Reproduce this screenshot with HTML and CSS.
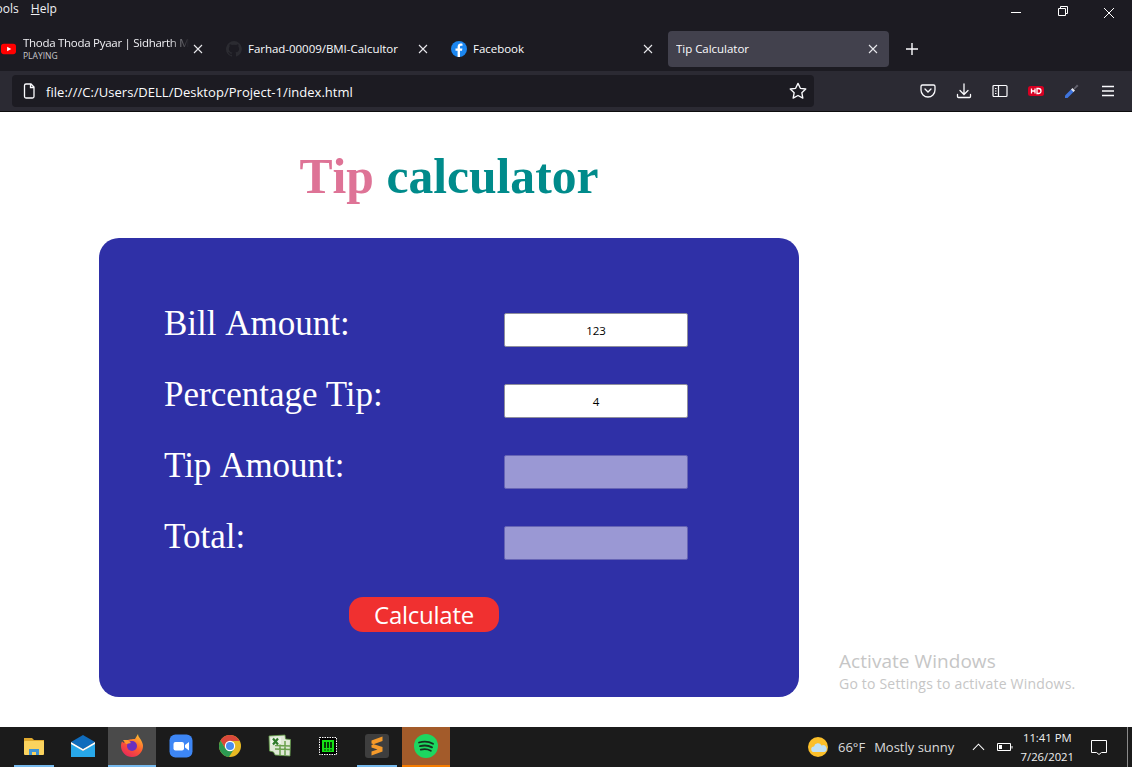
FILE: index.html
```html
<!DOCTYPE html>
<html lang="en">
<head>
<meta charset="utf-8">
<title>Tip Calculator</title>
<link rel="stylesheet" href="styles.css">
</head>
<body>
<div class="window">
  <header class="chrome">
    <div class="titlebar">
      <nav class="menu"><span class="menu-tools">Tools</span><span class="menu-help"><u>H</u>elp</span></nav>
      <div class="winctl">
        <svg class="wc" viewBox="0 0 46 20"><path d="M17 12.500h10" stroke="#fff" fill="none"/></svg>
        <svg class="wc" viewBox="0 0 46 20"><path d="M18.500 8.500h7v7h-7zM20.500 8.500v-2h7v7h-2" stroke="#fff" fill="none"/></svg>
        <svg class="wc" viewBox="0 0 46 20"><path d="M18 8l10 10M28 8l-10 10" stroke="#fff" fill="none"/></svg>
      </div>
    </div>
    <div class="tabs">
      <div class="tab tab-first">
        <svg class="fav fav-yt" viewBox="0 0 16 16"><rect y="2.500" width="16" height="11" rx="3" fill="#f00"/><path d="M6.500 5.500l4.500 2.500-4.500 2.500z" fill="#fff"/></svg>
        <div class="tab-stack"><span class="tab-title fade">Thoda Thoda Pyaar | Sidharth Malhotra</span><span class="tab-sub">PLAYING</span></div>
        <svg class="x" viewBox="0 0 10 10"><path d="M1 1l8 8M9 1l-8 8"/></svg>
      </div>
      <div class="tab">
        <svg class="fav" viewBox="0 0 16 16"><path fill="#2b2b31" d="M8 0a8 8 0 0 0-2.500 15.600c.4.100.5-.2.500-.4v-1.400c-2.200.5-2.700-1-2.700-1-.4-.9-.9-1.200-.9-1.200-.7-.5.100-.5.100-.5.800.100 1.200.8 1.200.8.700 1.200 1.900.9 2.300.7.100-.5.300-.9.500-1.100-1.800-.2-3.600-.9-3.600-4 0-.9.300-1.600.8-2.100-.1-.2-.4-1 .100-2.100 0 0 .7-.2 2.200.8a7.600 7.600 0 0 1 4 0c1.500-1 2.200-.8 2.200-.8.400 1.100.2 1.900.100 2.100.5.600.8 1.300.8 2.100 0 3.100-1.900 3.700-3.700 3.900.3.300.6.700.6 1.500v2.200c0 .2.100.5.600.4A8 8 0 0 0 8 0z"/></svg>
        <span class="tab-title">Farhad-00009/BMI-Calcultor</span>
        <svg class="x" viewBox="0 0 10 10"><path d="M1 1l8 8M9 1l-8 8"/></svg>
      </div>
      <div class="tab">
        <svg class="fav" viewBox="0 0 16 16"><circle cx="8" cy="8" r="8" fill="#1b86f0"/><path fill="#fff" d="M9 16V9.800h2l.4-2.400H9V6c0-.7.300-1.200 1.300-1.200h1.200V2.700c-.5-.1-1.100-.2-1.800-.2C8 2.500 6.600 3.700 6.600 5.800v1.600H4.500v2.400h2.100V16z"/></svg>
        <span class="tab-title">Facebook</span>
        <svg class="x" viewBox="0 0 10 10"><path d="M1 1l8 8M9 1l-8 8"/></svg>
      </div>
      <div class="tab tab-active">
        <span class="tab-title">Tip Calculator</span>
        <svg class="x" viewBox="0 0 10 10"><path d="M1 1l8 8M9 1l-8 8"/></svg>
      </div>
      <svg class="newtab" viewBox="0 0 14 14"><path d="M7 1v12M1 7h12" stroke="#fbfbfe" stroke-width="1.400" fill="none"/></svg>
    </div>
    <div class="toolbar">
      <div class="urlbar">
        <svg class="ic16" viewBox="0 0 16 16"><path d="M3.500 2.500a1.500 1.500 0 0 1 1.500-1.500h5l3 3v9.500a1.500 1.500 0 0 1-1.500 1.500H5a1.500 1.500 0 0 1-1.500-1.500zM9.500 1v3.500H13" fill="none" stroke="#fbfbfe" stroke-width="1.300"/></svg>
        <span class="url">file:///C:/Users/DELL/Desktop/Project-1/index.html</span>
        <svg class="star" viewBox="0 0 16 16"><path d="M8 1.200l2.100 4.400 4.800.6-3.500 3.300.9 4.800L8 12l-4.300 2.300.9-4.800L1.100 6.200l4.800-.6z" fill="none" stroke="#fbfbfe" stroke-width="1.200" stroke-linejoin="round"/></svg>
      </div>
      <div class="tools">
        <svg class="ic16" viewBox="0 0 16 16"><path d="M2.500 2h11A1.500 1.500 0 0 1 15 3.500V7a7 7 0 0 1-14 0V3.500A1.500 1.500 0 0 1 2.500 2zM5 6l3 3 3-3" fill="none" stroke="#fbfbfe" stroke-width="1.300" stroke-linecap="round"/></svg>
        <svg class="ic16" viewBox="0 0 16 16"><path d="M8 1v10M4 7.500l4 4 4-4M1.500 11.500v2a1 1 0 0 0 1 1h11a1 1 0 0 0 1-1v-2" fill="none" stroke="#fbfbfe" stroke-width="1.300" stroke-linecap="round"/></svg>
        <svg class="ic16" viewBox="0 0 16 16"><path d="M2 2.500h12a1 1 0 0 1 1 1v9a1 1 0 0 1-1 1H2a1 1 0 0 1-1-1v-9a1 1 0 0 1 1-1zM6.500 2.500v11M3 5.500h1.500M3 8h1.500M3 10.500h1.500" fill="none" stroke="#fbfbfe" stroke-width="1.200"/></svg>
        <svg class="ic16" viewBox="0 0 16 16"><rect y="3" width="16" height="10" rx="2.500" fill="#d70022"/><path d="M3.500 5.500v5M7 5.500v5M3.500 8H7M9 5.500v5h1.500a2.500 2.500 0 0 0 0-5z" fill="none" stroke="#fff" stroke-width="1.300"/></svg>
        <svg class="ic16" viewBox="0 0 16 16"><path d="M1 15l0-2.500L7.500 6l2.500 2.500L3.500 15z" fill="#3f74dc"/><path d="M7 6.500l2.500 2.500 1.500-1.500L8.500 5z" fill="#e6e6ee"/><path d="M10 6l-.5-.5L13 1.500l1.500 1.500-4 3.500z" fill="#63626e"/></svg>
        <svg class="ic16" viewBox="0 0 16 16"><path d="M2 3.500h12M2 8h12M2 12.500h12" fill="none" stroke="#fbfbfe" stroke-width="1.400"/></svg>
      </div>
    </div>
  </header>

  <main class="page">
    <div class="content">
      <h1 class="heading"><span class="tip">Tip</span> <span class="calc">calculator</span></h1>
      <form class="card">
        <div class="fields">
          <label class="field-label">Bill&nbsp;Amount:</label>
          <input class="field" type="text" value="123">
          <label class="field-label">Percentage Tip:</label>
          <input class="field" type="text" value="4">
          <label class="field-label">Tip&nbsp;Amount:</label>
          <input class="field" type="text" disabled>
          <label class="field-label">Total:</label>
          <input class="field" type="text" disabled>
        </div>
        <button class="calculate" type="button">Calculate</button>
      </form>
    </div>
    <div class="activate">
      <div class="activate-title">Activate Windows</div>
      <div class="activate-sub">Go to Settings to activate Windows.</div>
    </div>
  </main>

  <footer class="taskbar">
    <div class="apps">
      <div class="app app-open"><svg class="appic" viewBox="0 0 24 24"><path d="M2 4h8l2 2h10v3H2z" fill="#e0a92e"/><rect x="2" y="7" width="20" height="14" rx="1" fill="#fbd35e"/><path d="M7 15h10v6h-3v-3h-4v3H7z" fill="#3f95d6"/></svg></div>
      <div class="app"><svg class="appic" viewBox="0 0 24 24"><path d="M0 9v14h24V9L12 17z" fill="#28a8ea"/><path d="M0 8L12 1l12 7-12 7z" fill="#0f6cbd"/><path d="M0 8l12 7 12-7v2l-12 7-12-7z" fill="#fff"/></svg></div>
      <div class="app app-active app-open"><svg class="appic" viewBox="0 0 24 24"><defs><linearGradient id="ff" x1="0.800" y1="0" x2="0.200" y2="1"><stop offset="0" stop-color="#ffc22e"/><stop offset="0.500" stop-color="#ff5a30"/><stop offset="1" stop-color="#e6245e"/></linearGradient></defs><path d="M12 23A11 11 0 0 1 1 12c0-2 .5-3.500 1-4.500L4 9c1-2 2-3 4-3 2-1 6-1 7-1 1-2 2-3 3-5 0 2 1 3 3 6 1 2 2 4 2 6a11 11 0 0 1-11 11z" fill="url(#ff)"/><circle cx="12" cy="12" r="5" fill="#6b2fc0"/><path d="M3 6l5 0 3 3-5 1z" fill="#ff9a30"/></svg></div>
      <div class="app"><svg class="appic" viewBox="0 0 24 24"><rect width="23" height="23" x="0.500" y="0.500" rx="6" fill="#3d86f5"/><rect x="4.500" y="8" width="10.500" height="8.500" rx="2" fill="#fff"/><path d="M16 11l4-3v8.500l-4-3z" fill="#fff"/></svg></div>
      <div class="app"><svg class="appic" viewBox="0 0 24 24"><circle cx="12" cy="12" r="11" fill="#e8b923"/><path d="M12 1a11 11 0 0 0-9.500 5.500L7 14l5-7h9.500A11 11 0 0 0 12 1z" fill="#d9483b"/><path d="M2.500 6.500A11 11 0 0 0 11 23l5-8-9-1z" fill="#2c9a52"/><circle cx="12" cy="12" r="5.200" fill="#fff"/><circle cx="12" cy="12" r="4" fill="#4a8df0"/></svg></div>
      <div class="app"><svg class="appic" viewBox="0 0 24 24"><path d="M2 2l16-1 .5 4 5 .5L23 22l-15-1-1.500-3L2.500 17z" fill="#dfe9d6" stroke="#5f9a45" stroke-width=".8"/><path d="M8 11.500l15 .5M8 15l15 .5M13 7v14M18 7v14" stroke="#6aa04e" stroke-width="1.500"/><path d="M4 4l10-.5v7L4 11z" fill="#eef4ea"/><path d="M6 4.500l5 6M11 4.500l-5 6" stroke="#2e7a2a" stroke-width="2.200"/></svg></div>
      <div class="app"><svg class="appic appic-sm" viewBox="0 0 18 18"><rect x="0.500" y="0.500" width="17" height="17" fill="#000" stroke="#fff" stroke-dasharray="1.500 1"/><rect x="3" y="3" width="12" height="12" fill="#16e016"/><path d="M6 5v6M9 5v6M12 5v6M6 12.500v1M9 12.500v1M12 12.500v1" stroke="#000" stroke-width="1.500"/></svg></div>
      <div class="app app-open"><svg class="appic" viewBox="0 0 24 24"><rect width="24" height="24" rx="3" fill="#3e3e3e"/><path d="M17.500 4L6.500 8v4.500l11-4zM6.500 11l11 3.500V19L6.500 23 6.500 19l6-2-6-2z" fill="#f59a2a" transform="translate(0 -1.500)"/></svg></div>
      <div class="app app-flash"><svg class="appic" viewBox="0 0 24 24"><circle cx="12" cy="12" r="12" fill="#1ed760"/><path d="M5 8.500c4.500-1.300 10-1 14 1.200M6 12.200c4-1.100 8.500-.8 12 1.200M6.800 15.700c3.500-.9 7-.6 10 1.100" fill="none" stroke="#16301f" stroke-width="1.800" stroke-linecap="round"/></svg></div>
    </div>
    <div class="tray">
      <svg class="weather" viewBox="0 0 20 20"><circle cx="10" cy="10" r="10" fill="#fbbf2a"/><path d="M6 15a2.800 2.800 0 0 1 0-5.600 4 4 0 0 1 7.500-1A3.300 3.300 0 0 1 16.500 15z" fill="#bfe0f5"/></svg>
      <span class="temp">66°F</span>
      <span class="cond">Mostly sunny</span>
      <svg class="chev" viewBox="0 0 14 8"><path d="M1 7l6-6 6 6" fill="none" stroke="#fff" stroke-width="1.100"/></svg>
      <svg class="batt" viewBox="0 0 16 10"><path d="M.5 1.500h13v7H.5zM15 4v2.500" fill="none" stroke="#fff"/><rect x="2" y="3" width="3" height="4" fill="#fff"/></svg>
      <div class="clock"><span>11:41 PM</span><span>7/26/2021</span></div>
      <svg class="notif" viewBox="0 0 16 15"><path d="M.5 .5h15v12h-5L8 14.500 5.500 12.500h-5z" fill="none" stroke="#fff"/></svg>
      <span class="edge"></span>
    </div>
  </footer>
</div>
</body>
</html>
```

FILE: styles.css
```css
* { box-sizing: border-box; }
html, body { margin: 0; padding: 0; height: 100%; overflow: hidden; background: #fff; }
.window { display: flex; flex-direction: column; height: 767px; width: 1132px; font-family: "Open Sans", "Noto Sans", sans-serif; }

.chrome { height: 112px; background: #1c1b22; color: #fbfbfe; flex: none; display: flex; flex-direction: column; border-bottom: 1px solid #0c0c0d; }
.titlebar { height: 18px; display: flex; justify-content: space-between; flex: none; }
.menu { display: flex; font-size: 12px; line-height: 17px; color: #f0f0f4; overflow: hidden; }
.menu-tools { margin-left: -11px; }
.menu-help { margin-left: 12px; }
.winctl { display: flex; }
.wc { width: 46px; height: 20px; display: block; }

.tabs { height: 53px; display: flex; align-items: flex-end; padding-bottom: 4px; margin-left: -7px; gap: 4px; flex: none; }
.tab { width: 221px; height: 36px; display: flex; align-items: center; padding: 0 8px; border-radius: 4px; flex: none; }
.tab-active { background: #42414d; }
.fav { width: 16px; height: 16px; flex: none; margin-right: 6px; }
.fav-yt { width: 15px; margin-right: 7px; }
.tab-title { font-size: 11.500px; letter-spacing: -0.03px; line-height: 16px; white-space: nowrap; overflow: hidden; flex: 1; color: #fbfbfe; }
.tab-stack { display: flex; flex-direction: column; flex: 1; min-width: 0; margin-top: -1px; }
.tab-stack .tab-title { flex: none; line-height: 15px; color: #f0f0f4; letter-spacing: -0.28px; }
.fade { -webkit-mask-image: linear-gradient(90deg, #000 88%, transparent 100%); mask-image: linear-gradient(90deg, #000 88%, transparent 100%); }
.tab-sub { font-size: 8.500px; line-height: 12px; color: #c8c8cc; }
.x { width: 10px; height: 10px; flex: none; margin-left: 6px; margin-right: 3px; fill: none; stroke: #e8e8ec; stroke-width: 1.100; }
.tab-first .x { margin-left: 4px; }
.newtab { width: 14px; height: 14px; margin: 0 0 11px 12px; flex: none; }

.toolbar { height: 40px; background: #2b2a33; display: flex; align-items: center; padding: 0 16px 0 12px; flex: none; }
.urlbar { width: 802px; height: 32px; background: #1c1b22; border-radius: 4px; display: flex; align-items: center; padding: 0 7px 0 9px; }
.ic16 { width: 16px; height: 16px; display: block; flex: none; }
.url { font-size: 13px; letter-spacing: 0.04px; line-height: 20px; margin: 2px 0 0 9px; flex: 1; white-space: nowrap; color: #fbfbfe; }
.star { width: 18px; height: 18px; flex: none; }
.tools { margin-left: auto; display: flex; gap: 20px; }

.page { position: relative; flex: 1; background: #fff; min-height: 0; }
.content { width: 700px; margin-left: 99px; }
.heading { margin: 0; height: 126px; padding-top: 35px; text-align: center; font-family: "Liberation Serif", serif; font-size: 49.600px; line-height: 60px; font-weight: 700; font-kerning: none; }
.tip { color: #de7396; }
.calc { color: #008b8b; }
.card { height: 459px; background: #2f30a7; border-radius: 20px; padding: 75px 0 0 65px; }
.fields { display: grid; grid-template-columns: 340px 184px; grid-auto-rows: 34px; row-gap: 37px; }
.field-label { font-family: "Liberation Serif", serif; font-size: 35px; line-height: 40px; color: #fff; margin-top: -9px; white-space: nowrap; }
.field { width: 184px; height: 34px; border: 1px solid #8f8f9d; border-radius: 2px; background: #fff; color: #000; font-family: "Open Sans", sans-serif; font-size: 11.500px; text-align: center; padding: 0 2px; margin: 0; }
.field:disabled { background: #9a98d4; border-color: #6664b5; }
.calculate { display: block; width: 150px; height: 35px; margin: 37px 0 0 185px; padding: 0; border: 0; border-radius: 14px; background: #f03030; color: #fff; font-family: "Open Sans", sans-serif; font-size: 24px; letter-spacing: -0.25px; line-height: 35px; }

.activate { position: absolute; left: 839px; top: 537px; color: #c6c6c6; }
.activate-title { font-size: 19px; letter-spacing: 0.05px; line-height: 24px; }
.activate-sub { font-size: 14px; letter-spacing: 0.2px; line-height: 21px; }

.taskbar { height: 40px; flex: none; background: #1b1b1b; display: flex; justify-content: space-between; color: #fff; }
.apps { display: flex; gap: 1px; padding-left: 10px; }
.app { width: 48px; height: 40px; display: flex; align-items: center; justify-content: center; position: relative; }
.app-active { background: #4a4a4a; }
.app-flash { background: #a35b2a; }
.app-open::after, .app-flash::after { content: ""; position: absolute; left: 4px; right: 4px; bottom: 0; height: 2px; background: #76b9ed; }
.app-active::after { left: 0; right: 0; }
.app-flash::after { left: 0; right: 0; background: #f57c00; }
.appic { width: 24px; height: 24px; display: block; margin-bottom: 2px; }
.appic-sm { width: 18px; height: 18px; }
.tray { display: flex; align-items: center; width: 324px; font-size: 13px; color: #dcdcdc; }
.weather { width: 20px; height: 20px; margin-right: 10px; flex: none; }
.temp { margin-right: 9px; }
.cond { margin-right: 18px; white-space: nowrap; }
.chev { width: 13px; height: 8px; margin-right: 12px; }
.batt { width: 16px; height: 10px; margin-right: 6px; }
.clock { display: flex; flex-direction: column; align-items: center; width: 56px; font-size: 11.300px; line-height: 19px; margin-top: -1px; color: #f0f0f0; }
.notif { width: 16px; height: 15px; margin-left: 16px; }
.edge { width: 1px; height: 40px; background: #8a8a8a; margin-left: 20px; flex: none; }
```
